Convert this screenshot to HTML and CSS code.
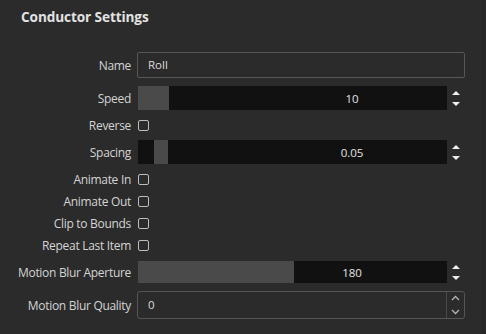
FILE: index.html
```html
<!DOCTYPE html>
<html lang="en">

<head>
    <meta charset="UTF-8">
    <meta name="viewport" content="width=device-width, initial-scale=1.0">
    <title>Conductor Settings</title>
    <link rel="stylesheet" href="styles.css">
</head>

<body>
    <div class="panel">
        <h1 class="title">Conductor Settings</h1>

        <div class="row row-name">
            <label>Name</label>
            <div class="text-input">Roll</div>
        </div>

        <div class="row row-slider speed">
            <label>Speed</label>
            <div class="slider">
                <div class="fill" style="width: 31px"></div>
                <span class="value">10</span>
            </div>
            <div class="arrows"><span class="up"></span><span class="down"></span></div>
        </div>

        <div class="row row-check reverse">
            <label>Reverse</label>
            <span class="checkbox"></span>
        </div>

        <div class="row row-slider spacing">
            <label>Spacing</label>
            <div class="slider">
                <div class="thumb" style="left: 16px; width: 14px"></div>
                <span class="value">0.05</span>
            </div>
            <div class="arrows"><span class="up"></span><span class="down"></span></div>
        </div>

        <div class="row row-check first">
            <label>Animate In</label>
            <span class="checkbox"></span>
        </div>
        <div class="row row-check">
            <label>Animate Out</label>
            <span class="checkbox"></span>
        </div>
        <div class="row row-check">
            <label>Clip to Bounds</label>
            <span class="checkbox"></span>
        </div>
        <div class="row row-check">
            <label>Repeat Last Item</label>
            <span class="checkbox"></span>
        </div>

        <div class="row row-slider aperture">
            <label>Motion Blur Aperture</label>
            <div class="slider">
                <div class="fill" style="width: 156px"></div>
                <span class="value">180</span>
            </div>
            <div class="arrows"><span class="up"></span><span class="down"></span></div>
        </div>

        <div class="row row-spin">
            <label>Motion Blur Quality</label>
            <div class="spinbox">
                <span class="spin-value">0</span>
                <div class="spin-buttons">
                    <svg width="9" height="6" viewBox="0 0 9 6"><path d="M1 5 L4.5 1.5 L8 5" fill="none" stroke="#b5b5b5" stroke-width="1.3"/></svg>
                    <svg width="9" height="6" viewBox="0 0 9 6"><path d="M1 1 L4.5 4.5 L8 1" fill="none" stroke="#b5b5b5" stroke-width="1.3"/></svg>
                </div>
            </div>
        </div>
    </div>
</body>

</html>
```

FILE: styles.css
```css
body {
    margin: 0;
    background: #2b2b2b;
    font-family: "Open Sans", "Noto Sans", sans-serif;
    color: #d6d6d6;
    height: 334px;
    overflow: hidden;
}

.panel {
    width: 481px;
    height: 334px;
    border-right: 5px solid #272727;
    box-sizing: content-box;
}

.title {
    margin: 0;
    padding: 8px 0 0 21px;
    height: 44px;
    box-sizing: border-box;
    font-size: 13.6px;
    font-weight: 700;
    color: #e2e2e2;
    line-height: 18px;
    letter-spacing: -0.1px;
}

.row {
    display: flex;
    align-items: center;
    height: 22px;
}

.row label {
    width: 131px;
    text-align: right;
    font-size: 12px;
    letter-spacing: -0.3px;
    padding-right: 6px;
    flex-shrink: 0;
    color: #d4d4d4;
}

.row-name {
    height: 26px;
    margin-top: 8px;
}

.text-input {
    width: 328px;
    height: 26px;
    box-sizing: border-box;
    border: 1px solid #575757;
    border-radius: 2px;
    padding-left: 10px;
    font-size: 11.5px;
    line-height: 24px;
    color: #dcdcdc;
}

.row-slider {
    height: 24px;
}

.speed {
    margin-top: 8px;
}

.aperture {
    height: 22px;
    margin-top: 5px;
}

.slider {
    position: relative;
    width: 309px;
    height: 100%;
    margin-left: 1px;
    background: #111111;
}

.fill,
.thumb {
    position: absolute;
    top: 0;
    bottom: 0;
    left: 0;
    background: #4a4a4a;
}

.value {
    position: absolute;
    left: 214px;
    top: 0;
    bottom: 0;
    display: flex;
    align-items: center;
    transform: translateX(-50%);
    font-size: 11.5px;
    color: #e4e4e4;
}

.arrows {
    width: 18px;
    height: 100%;
    display: flex;
    flex-direction: column;
    justify-content: center;
    align-items: center;
    gap: 7px;
}

.arrows .up {
    width: 0;
    height: 0;
    border-left: 4px solid transparent;
    border-right: 4px solid transparent;
    border-bottom: 4px solid #f0f0f0;
}

.arrows .down {
    width: 0;
    height: 0;
    border-left: 4px solid transparent;
    border-right: 4px solid transparent;
    border-top: 4px solid #f0f0f0;
}

.row-check.reverse {
    height: 30px;
}

.row-check.first {
    margin-top: 4px;
}

.checkbox {
    width: 11px;
    height: 11px;
    margin-left: 1px;
    border: 1.5px solid #bdbdbd;
    border-radius: 2px;
    box-sizing: border-box;
}

.row-spin {
    height: 28px;
    margin-top: 8px;
}

.spinbox {
    width: 328px;
    height: 28px;
    box-sizing: border-box;
    border: 1px solid #555555;
    border-radius: 3px;
    display: flex;
}

.spin-value {
    flex: 1;
    padding-left: 10px;
    font-size: 11.5px;
    line-height: 26px;
    color: #dcdcdc;
}

.spin-buttons {
    width: 17px;
    border-left: 1px solid #4a4a4a;
    display: flex;
    flex-direction: column;
    justify-content: center;
    align-items: center;
    gap: 8px;
}
```
